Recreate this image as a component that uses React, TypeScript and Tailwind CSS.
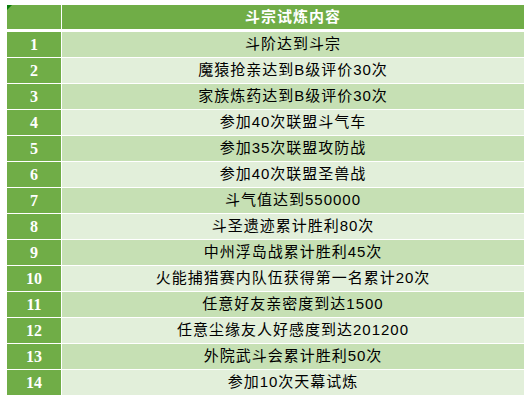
const rows = [
  "斗阶达到斗宗",
  "魔猿抢亲达到B级评价30次",
  "家族炼药达到B级评价30次",
  "参加40次联盟斗气车",
  "参加35次联盟攻防战",
  "参加40次联盟圣兽战",
  "斗气值达到550000",
  "斗圣遗迹累计胜利80次",
  "中州浮岛战累计胜利45次",
  "火能捕猎赛内队伍获得第一名累计20次",
  "任意好友亲密度到达1500",
  "任意尘缘友人好感度到达201200",
  "外院武斗会累计胜利50次",
  "参加10次天幕试炼",
];

export default function App() {
  return (
    <div className="w-[531px] h-[404px] bg-white pt-[5px] pl-[7px]">
      <div className="grid grid-cols-[54px_462px] gap-x-px">
        {/* 表头 */}
        <div className="relative h-[24px] bg-[#70ad47] mb-[3px]">
          <div className="absolute left-0 top-0 w-0 h-0 border-t-[5px] border-r-[5px] border-t-[#0b7d0b] border-r-transparent" />
        </div>
        <div className="h-[24px] bg-[#70ad47] mb-[3px] flex items-center justify-center text-white font-bold text-[15px] tracking-[1px] font-['Liberation_Sans','Noto_Sans_CJK_SC',sans-serif]">
          斗宗试炼内容
        </div>

        {rows.map((text, i) => (
          <div key={i} className="contents">
            <div className="h-[25px] mb-px bg-[#70ad47] flex items-center justify-center text-white font-bold text-[16px] font-['Liberation_Serif',serif]">
              {i + 1}
            </div>
            <div
              className={`h-[25px] mb-px flex items-center justify-center text-black text-[15px] tracking-[1px] font-['Liberation_Sans','Noto_Sans_CJK_SC',sans-serif] ${
                i % 2 === 0 ? "bg-[#c6e0b4]" : "bg-[#e2efda]"
              }`}
            >
              {text}
            </div>
          </div>
        ))}
      </div>
    </div>
  );
}
